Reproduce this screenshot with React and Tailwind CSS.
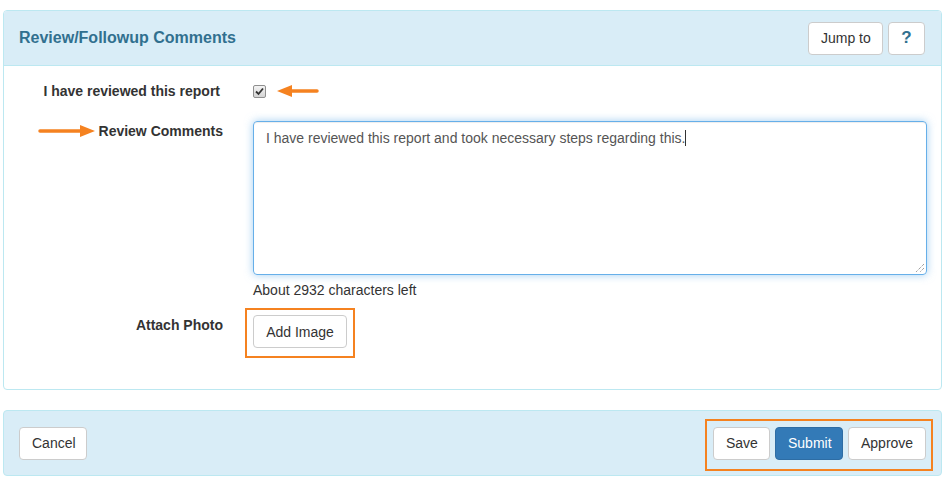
import React from "react";

const font = { fontFamily: '"Liberation Sans", Arial, sans-serif' };

function ArrowLeft() {
  return (
    <svg width="42" height="14" viewBox="0 0 42 14" className="block">
      <path d="M0 7 L15 1 L15 13 Z" fill="#f58220" />
      <line x1="14" y1="7" x2="40" y2="7" stroke="#f58220" strokeWidth="3.5" strokeLinecap="round" />
    </svg>
  );
}

function ArrowRight() {
  return (
    <svg width="58" height="14" viewBox="0 0 58 14" className="inline-block align-middle mr-[3px] -mt-[2px]">
      <line x1="2" y1="7" x2="44" y2="7" stroke="#f58220" strokeWidth="3.5" strokeLinecap="round" />
      <path d="M57 7 L42 1 L42 13 Z" fill="#f58220" />
    </svg>
  );
}

function Btn({ children, primary, className = "" }) {
  return (
    <button
      className={`h-[33px] px-[12px] rounded-[4px] border text-[14px] leading-[20px] whitespace-nowrap ${
        primary ? "bg-[#337ab7] border-[#2e6da4] text-white" : "bg-white border-[#ccc] text-[#333]"
      } ${className}`}
    >
      {children}
    </button>
  );
}

export default function App() {
  return (
    <div className="min-h-screen bg-white text-[#333] text-[14px]" style={font}>
      <div className="pt-[10px] pl-[3px] w-[942px]">
        {/* Review panel */}
        <div className="border border-[#bce8f1] rounded-[4px] bg-white">
          <div className="bg-[#d9edf7] border-b border-[#bce8f1] rounded-t-[3px] flex items-center justify-between pl-[15px] pr-[16px] h-[55px]">
            <h3 className="text-[16px] font-bold text-[#31708f]">Review/Followup Comments</h3>
            <div className="flex gap-[5px]">
              <Btn className="w-[75px] px-0">Jump to</Btn>
              <Btn className="w-[37px] px-0 font-bold text-[17px] text-[#31708f]">?</Btn>
            </div>
          </div>

          <div className="pt-[15px] pb-[41px]">
            {/* checkbox row */}
            <div className="flex">
              <div className="w-[234px] pr-[18px] text-right font-bold leading-[20px]">I have reviewed this report</div>
              <div className="pl-[15px] flex items-center h-[20px] gap-[11px]">
                <span className="w-[13px] h-[13px] rounded-[2px] border border-[#8f8f8f] bg-gradient-to-b from-[#f4f4f4] to-[#d4d4d4] flex items-center justify-center">
                  <svg width="9" height="9" viewBox="0 0 9 9">
                    <path d="M1 4.5 L3.5 7 L8 1.5" fill="none" stroke="#333" strokeWidth="1.8" />
                  </svg>
                </span>
                <ArrowLeft />
              </div>
            </div>

            {/* comments row */}
            <div className="flex mt-[20px]">
              <div className="w-[234px] pr-[15px] text-right font-bold leading-[20px]">
                <ArrowRight />
                Review Comments
              </div>
              <div className="pl-[15px] w-[689px]">
                <div className="relative h-[154px] border border-[#66afe9] rounded-[4px] px-[12px] py-[6px] text-[#555] leading-[20px] shadow-[inset_0_1px_1px_rgba(0,0,0,0.075),0_0_8px_rgba(102,175,233,0.6)]">
                  I have reviewed this report and took necessary steps regarding this.
                  <span className="inline-block w-px h-[16px] bg-[#333] align-middle -mt-[2px]"></span>
                  <svg width="10" height="10" viewBox="0 0 10 10" className="absolute right-[1px] bottom-[1px]">
                    <line x1="9" y1="1" x2="1" y2="9" stroke="#777" strokeWidth="1" strokeDasharray="1 1" />
                    <line x1="9" y1="5" x2="5" y2="9" stroke="#777" strokeWidth="1" strokeDasharray="1 1" />
                  </svg>
                </div>
                <div className="mt-[5px] leading-[20px]">About 2932 characters left</div>
              </div>
            </div>

            {/* attach row */}
            <div className="flex mt-[15px]">
              <div className="w-[234px] pr-[15px] text-right font-bold leading-[20px]">Attach Photo</div>
              <div className="pl-[15px]">
                <div className="relative inline-block">
                  <Btn className="w-[94px] px-0">Add Image</Btn>
                  <span className="absolute -left-[8px] -top-[7px] -right-[8px] -bottom-[10px] border-2 border-[#f58220]"></span>
                </div>
              </div>
            </div>
          </div>
        </div>

        {/* Footer panel */}
        <div className="mt-[20px] bg-[#d9edf7] border border-[#bce8f1] rounded-[4px] h-[66px] px-[15px] flex items-center justify-between">
          <Btn className="w-[68px] px-0">Cancel</Btn>
          <div className="relative flex gap-[5px]">
            <Btn className="w-[57px] px-0">Save</Btn>
            <Btn primary className="w-[68px] px-0">Submit</Btn>
            <Btn className="w-[78px] px-0">Approve</Btn>
            <span className="absolute -left-[8px] -top-[8px] -right-[7px] -bottom-[11px] border-2 border-[#f58220]"></span>
          </div>
        </div>
      </div>
    </div>
  );
}
